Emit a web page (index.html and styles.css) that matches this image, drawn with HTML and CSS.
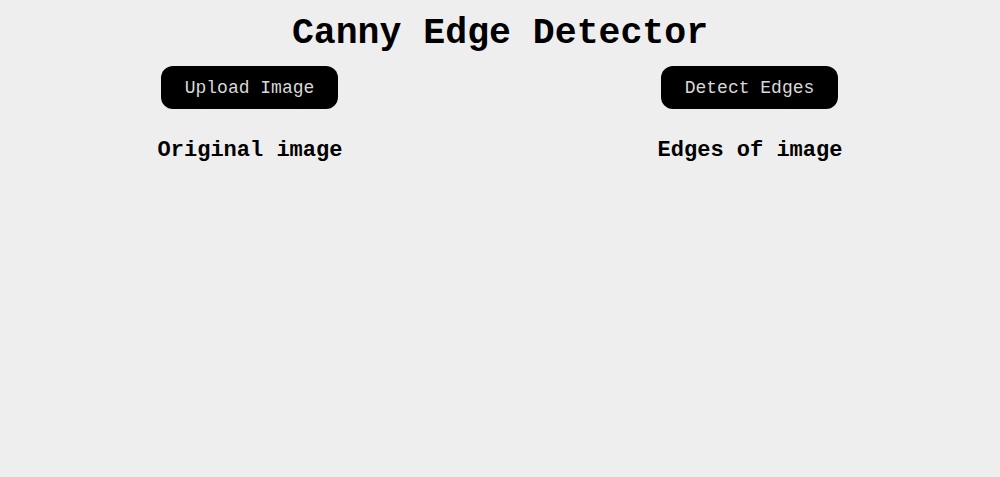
FILE: index.html
```html
<!DOCTYPE html>
<html>
<head>
<meta charset="utf-8">
<title>Canny Edge Detector</title>
<link rel="stylesheet" href="styles.css">
</head>
<body>
<h1 class="title">Canny Edge Detector</h1>
<div class="panels">
  <div class="panel">
    <button class="btn">Upload Image</button>
    <h3 class="label">Original image</h3>
  </div>
  <div class="panel">
    <button class="btn">Detect Edges</button>
    <h3 class="label">Edges of image</h3>
  </div>
</div>
</body>
</html>
```

FILE: styles.css
```css
html, body {
  margin: 0;
  padding: 0;
  background: #eeeeee;
  height: 100%;
}
body {
  font-family: "Liberation Mono", "Courier New", monospace;
  color: #000;
}
.title {
  margin: 0;
  padding-top: 15px;
  font-size: 36.5px;
  line-height: 38px;
  text-align: center;
  font-weight: bold;
}
.panels {
  display: flex;
  margin-top: 13px;
}
.panel {
  flex: 1;
  display: flex;
  flex-direction: column;
  align-items: center;
}
.btn {
  width: 177px;
  height: 43px;
  margin-right: 1px;
  background: #000;
  color: #d8d8d8;
  border: none;
  border-radius: 12px;
  font-family: "Liberation Mono", "Courier New", monospace;
  font-size: 18px;
  padding: 0;
}
.label {
  margin: 29px 0 0;
  font-size: 22px;
  line-height: 26px;
  font-weight: bold;
}
```
